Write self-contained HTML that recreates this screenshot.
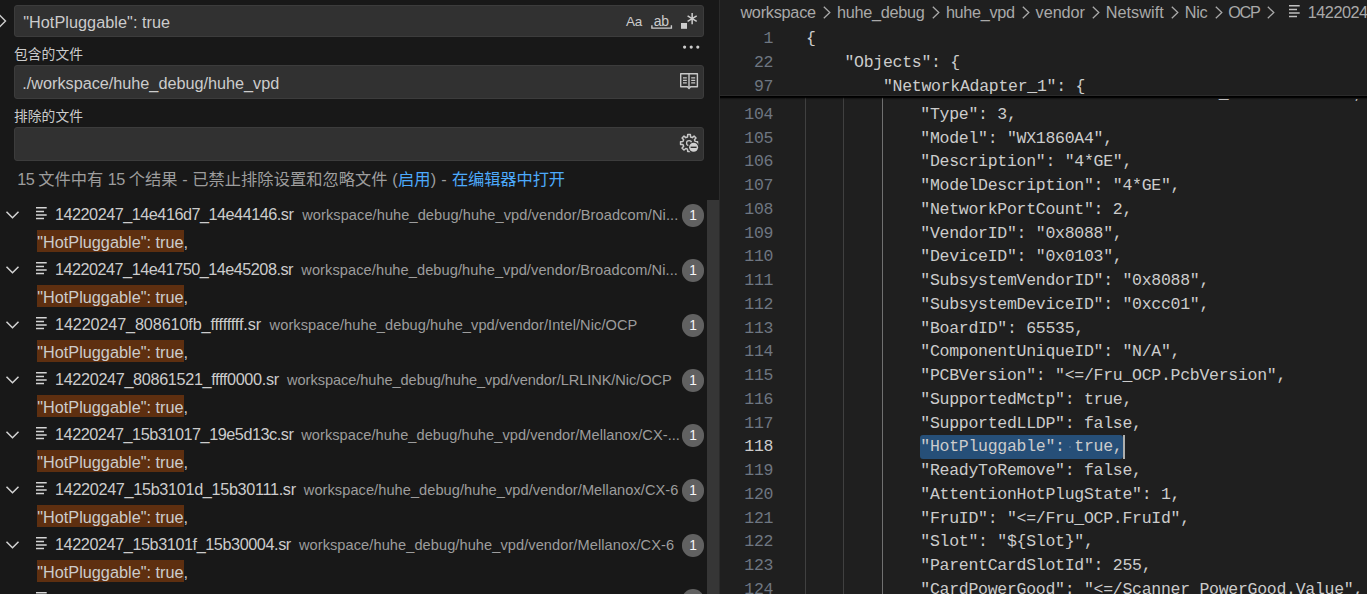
<!DOCTYPE html>
<html lang="zh-CN"><head><meta charset="utf-8"><title>Search</title>
<style>
html,body{margin:0;padding:0;background:#181818;}
body{width:1367px;height:594px;overflow:hidden;position:relative;font-family:'Liberation Sans','Noto Sans CJK SC',sans-serif;color:#cccccc;}
#side{position:absolute;left:0;top:0;width:719px;height:594px;background:#181818;overflow:hidden;}
#side span, #ed span{position:absolute;white-space:pre;}
.box{position:absolute;left:14px;width:690px;background:#313131;border-radius:3px;border:1px solid #3c3c3c;box-sizing:border-box;}
.row{position:absolute;left:0;width:707px;height:27.5px;}
.row span{top:0;line-height:27.5px;}
.nm{color:#cccccc;}
.ds{color:#9d9d9d;margin-top:1px;}
.badge{position:absolute;left:681.7px;top:3.5px;width:22.6px;height:22.6px;border-radius:50%;background:#616161;color:#f8f8f8;font-size:13.75px;line-height:24.6px;text-align:center;}
.hl{position:absolute;left:37px;top:2px;width:147px;height:22px;background:#5e2f10;}
#ed{position:absolute;left:720px;top:0;width:647px;height:594px;background:#1f1f1f;overflow:hidden;}
#ed .ln{font-family:'Liberation Mono','Noto Sans CJK SC',monospace;font-size:16.5px;letter-spacing:-0.276px;color:#6e7681;line-height:23.75px;text-align:right;width:60px;left:-6.8px;}
#ed .cd{font-family:'Liberation Mono','Noto Sans CJK SC',monospace;font-size:16.5px;letter-spacing:-0.276px;color:#cccccc;line-height:23.75px;}
.g{position:absolute;width:1px;background:#404040;}
.bc{color:#a9a9a9;top:0;line-height:24px;}
svg{position:absolute;overflow:visible;}
</style></head><body>

<div id="side">
<svg style="left:-5px;top:14px" width="12" height="14" viewBox="0 0 12 14"><path d="M4.5 1 L10.5 7 L4.5 13" fill="none" stroke="#cccccc" stroke-width="1.4"/></svg>
<div class="box" style="top:5px;height:32px"></div>
<span style="left:23.20px;font-size:16.25px;letter-spacing:0.043px;top:6px;line-height:32px;">&quot;HotPluggable&quot;: true</span>
<span style="left:626px;top:6px;line-height:32px;font-size:13.5px;color:#cccccc;letter-spacing:-0.3px">Aa</span>
<span style="left:653.7px;top:5px;line-height:32px;font-size:14px;color:#cccccc;letter-spacing:-0.2px">ab</span>
<svg style="left:0;top:0" width="719" height="60" viewBox="0 0 719 60"><path d="M651.9 25.3 V28.1 H671.4 V25.3" fill="none" stroke="#cccccc" stroke-width="1.4"/><rect x="681" y="23" width="6" height="5.8" fill="#cccccc"/><path d="M692.15 13.1 V24.2 M687.6 15.9 L696.7 21.4 M696.7 15.9 L687.6 21.4" fill="none" stroke="#cccccc" stroke-width="1.5"/><circle cx="684.6" cy="47.1" r="1.6" fill="#cccccc"/><circle cx="691.2" cy="47.1" r="1.6" fill="#cccccc"/><circle cx="697.8" cy="47.1" r="1.6" fill="#cccccc"/></svg>
<span style="left:14.00px;font-size:13.75px;letter-spacing:0.047px;top:45px;line-height:20px;">包含的文件</span>
<div class="box" style="top:65px;height:34px"></div>
<span style="left:22.30px;font-size:16.25px;letter-spacing:-0.019px;top:67px;line-height:32px;">./workspace/huhe_debug/huhe_vpd</span>
<svg style="left:0;top:0" width="719" height="110" viewBox="0 0 719 110"><path d="M680.7 73.8 H697.4 V86.8 H690.6 L689 88.6 L687.4 86.8 H680.7 Z M689 74 V87" fill="none" stroke="#c8c8c8" stroke-width="1.4" stroke-linejoin="round"/><path d="M683 77.8 H686.8 M683 80.3 H686.8 M683 82.9 H686.8 M691.2 77.8 H695.2 M691.2 80.3 H695.2 M691.2 82.9 H695.2" stroke="#c8c8c8" stroke-width="1.2"/></svg>
<span style="left:14.00px;font-size:13.75px;letter-spacing:0.047px;top:107px;line-height:20px;">排除的文件</span>
<div class="box" style="top:127px;height:34px"></div>
<svg style="left:0;top:0" width="719" height="170" viewBox="0 0 719 170"><path d="M687.53 136.94 L687.70 134.56 L690.40 134.56 L690.57 136.94 L692.29 137.65 L694.10 136.09 L696.01 138.00 L694.45 139.81 L695.16 141.53 L697.54 141.70 L697.54 144.40 L695.16 144.57 L694.45 146.29 L696.01 148.10 L694.10 150.01 L692.29 148.45 L690.57 149.16 L690.40 151.54 L687.70 151.54 L687.53 149.16 L685.81 148.45 L684.00 150.01 L682.09 148.10 L683.65 146.29 L682.94 144.57 L680.56 144.40 L680.56 141.70 L682.94 141.53 L683.65 139.81 L682.09 138.00 L684.00 136.09 L685.81 137.65 Z" fill="none" stroke="#c8c8c8" stroke-width="1.5" stroke-linejoin="round"/><circle cx="689.05" cy="143.05" r="2.5" fill="none" stroke="#c8c8c8" stroke-width="1.3"/><circle cx="693.6" cy="147.3" r="5.6" fill="#313131"/><circle cx="693.6" cy="147.3" r="4.5" fill="#d0d0d0"/><path d="M690.6 147.3 H696.6" stroke="#313131" stroke-width="1.4"/></svg>
<span style="left:17.20px;font-size:16.25px;letter-spacing:0.037px;top:165px;line-height:28px;color:#9d9d9d;"><i style="font-style:normal;letter-spacing:-0.55px">15 </i>文件中有 <i style="font-style:normal;letter-spacing:-0.55px">15 </i>个结果 - 已禁止排除设置和忽略文件 (</span>
<span style="left:397.90px;font-size:16.25px;letter-spacing:0.150px;top:165px;line-height:28px;color:#4daafc;">启用</span>
<span style="left:430.70px;font-size:16.25px;letter-spacing:0.335px;top:165px;line-height:28px;color:#9d9d9d;">) - </span>
<span style="left:451.90px;font-size:16.25px;letter-spacing:-0.093px;top:165px;line-height:28px;color:#4daafc;">在编辑器中打开</span>
<div class="row" style="top:200.5px">
<svg style="left:6.4px;top:10.4px" width="13" height="8" viewBox="0 0 13 8"><path d="M0.5 0.7 L6.5 6.8 L12.5 0.7" fill="none" stroke="#d4d4d4" stroke-width="1.5"/></svg>
<svg style="left:35.6px;top:6px" width="12" height="13" viewBox="0 0 12 13"><path d="M0 0.8 H10.7 M0 4.4 H8 M0 8 H10.7 M0 11.6 H8" stroke="#d4d4d4" stroke-width="1.5"/></svg>
<span class="nm" style="left:55.00px;font-size:16.25px;letter-spacing:-0.508px;">14220247_14e416d7_14e44146.sr</span>
<span class="ds" style="left:302.20px;font-size:14.6px;letter-spacing:0.073px;">workspace/huhe_debug/huhe_vpd/vendor/Broadcom/Ni...</span>
<div class="badge">1</div>
</div>
<div class="row" style="top:228.0px"><div class="hl"></div>
<span style="left:37.2px;top:1px;font-size:16.25px;letter-spacing:0.013px;color:#cccccc">&quot;HotPluggable&quot;: true,</span>
</div>
<div class="row" style="top:255.5px">
<svg style="left:6.4px;top:10.4px" width="13" height="8" viewBox="0 0 13 8"><path d="M0.5 0.7 L6.5 6.8 L12.5 0.7" fill="none" stroke="#d4d4d4" stroke-width="1.5"/></svg>
<svg style="left:35.6px;top:6px" width="12" height="13" viewBox="0 0 12 13"><path d="M0 0.8 H10.7 M0 4.4 H8 M0 8 H10.7 M0 11.6 H8" stroke="#d4d4d4" stroke-width="1.5"/></svg>
<span class="nm" style="left:55.00px;font-size:16.25px;letter-spacing:-0.522px;">14220247_14e41750_14e45208.sr</span>
<span class="ds" style="left:301.30px;font-size:14.6px;letter-spacing:0.084px;">workspace/huhe_debug/huhe_vpd/vendor/Broadcom/Ni...</span>
<div class="badge">1</div>
</div>
<div class="row" style="top:283.0px"><div class="hl"></div>
<span style="left:37.2px;top:1px;font-size:16.25px;letter-spacing:0.013px;color:#cccccc">&quot;HotPluggable&quot;: true,</span>
</div>
<div class="row" style="top:310.5px">
<svg style="left:6.4px;top:10.4px" width="13" height="8" viewBox="0 0 13 8"><path d="M0.5 0.7 L6.5 6.8 L12.5 0.7" fill="none" stroke="#d4d4d4" stroke-width="1.5"/></svg>
<svg style="left:35.6px;top:6px" width="12" height="13" viewBox="0 0 12 13"><path d="M0 0.8 H10.7 M0 4.4 H8 M0 8 H10.7 M0 11.6 H8" stroke="#d4d4d4" stroke-width="1.5"/></svg>
<span class="nm" style="left:55.00px;font-size:16.25px;letter-spacing:-0.151px;">14220247_808610fb_ffffffff.sr</span>
<span class="ds" style="left:269.60px;font-size:14.6px;letter-spacing:0.070px;">workspace/huhe_debug/huhe_vpd/vendor/Intel/Nic/OCP</span>
<div class="badge">1</div>
</div>
<div class="row" style="top:338.0px"><div class="hl"></div>
<span style="left:37.2px;top:1px;font-size:16.25px;letter-spacing:0.013px;color:#cccccc">&quot;HotPluggable&quot;: true,</span>
</div>
<div class="row" style="top:365.5px">
<svg style="left:6.4px;top:10.4px" width="13" height="8" viewBox="0 0 13 8"><path d="M0.5 0.7 L6.5 6.8 L12.5 0.7" fill="none" stroke="#d4d4d4" stroke-width="1.5"/></svg>
<svg style="left:35.6px;top:6px" width="12" height="13" viewBox="0 0 12 13"><path d="M0 0.8 H10.7 M0 4.4 H8 M0 8 H10.7 M0 11.6 H8" stroke="#d4d4d4" stroke-width="1.5"/></svg>
<span class="nm" style="left:55.00px;font-size:16.25px;letter-spacing:-0.357px;">14220247_80861521_ffff0000.sr</span>
<span class="ds" style="left:287.10px;font-size:14.6px;letter-spacing:-0.063px;">workspace/huhe_debug/huhe_vpd/vendor/LRLINK/Nic/OCP</span>
<div class="badge">1</div>
</div>
<div class="row" style="top:393.0px"><div class="hl"></div>
<span style="left:37.2px;top:1px;font-size:16.25px;letter-spacing:0.013px;color:#cccccc">&quot;HotPluggable&quot;: true,</span>
</div>
<div class="row" style="top:420.5px">
<svg style="left:6.4px;top:10.4px" width="13" height="8" viewBox="0 0 13 8"><path d="M0.5 0.7 L6.5 6.8 L12.5 0.7" fill="none" stroke="#d4d4d4" stroke-width="1.5"/></svg>
<svg style="left:35.6px;top:6px" width="12" height="13" viewBox="0 0 12 13"><path d="M0 0.8 H10.7 M0 4.4 H8 M0 8 H10.7 M0 11.6 H8" stroke="#d4d4d4" stroke-width="1.5"/></svg>
<span class="nm" style="left:55.00px;font-size:16.25px;letter-spacing:-0.473px;">14220247_15b31017_19e5d13c.sr</span>
<span class="ds" style="left:301.20px;font-size:14.6px;letter-spacing:0.061px;">workspace/huhe_debug/huhe_vpd/vendor/Mellanox/CX-...</span>
<div class="badge">1</div>
</div>
<div class="row" style="top:448.0px"><div class="hl"></div>
<span style="left:37.2px;top:1px;font-size:16.25px;letter-spacing:0.013px;color:#cccccc">&quot;HotPluggable&quot;: true,</span>
</div>
<div class="row" style="top:475.5px">
<svg style="left:6.4px;top:10.4px" width="13" height="8" viewBox="0 0 13 8"><path d="M0.5 0.7 L6.5 6.8 L12.5 0.7" fill="none" stroke="#d4d4d4" stroke-width="1.5"/></svg>
<svg style="left:35.6px;top:6px" width="12" height="13" viewBox="0 0 12 13"><path d="M0 0.8 H10.7 M0 4.4 H8 M0 8 H10.7 M0 11.6 H8" stroke="#d4d4d4" stroke-width="1.5"/></svg>
<span class="nm" style="left:55.00px;font-size:16.25px;letter-spacing:-0.342px;">14220247_15b3101d_15b30111.sr</span>
<span class="ds" style="left:303.80px;font-size:14.6px;letter-spacing:0.060px;">workspace/huhe_debug/huhe_vpd/vendor/Mellanox/CX-6</span>
<div class="badge">1</div>
</div>
<div class="row" style="top:503.0px"><div class="hl"></div>
<span style="left:37.2px;top:1px;font-size:16.25px;letter-spacing:0.013px;color:#cccccc">&quot;HotPluggable&quot;: true,</span>
</div>
<div class="row" style="top:530.5px">
<svg style="left:6.4px;top:10.4px" width="13" height="8" viewBox="0 0 13 8"><path d="M0.5 0.7 L6.5 6.8 L12.5 0.7" fill="none" stroke="#d4d4d4" stroke-width="1.5"/></svg>
<svg style="left:35.6px;top:6px" width="12" height="13" viewBox="0 0 12 13"><path d="M0 0.8 H10.7 M0 4.4 H8 M0 8 H10.7 M0 11.6 H8" stroke="#d4d4d4" stroke-width="1.5"/></svg>
<span class="nm" style="left:55.00px;font-size:16.25px;letter-spacing:-0.438px;">14220247_15b3101f_15b30004.sr</span>
<span class="ds" style="left:298.90px;font-size:14.6px;letter-spacing:0.074px;">workspace/huhe_debug/huhe_vpd/vendor/Mellanox/CX-6</span>
<div class="badge">1</div>
</div>
<div class="row" style="top:558.0px"><div class="hl"></div>
<span style="left:37.2px;top:1px;font-size:16.25px;letter-spacing:0.013px;color:#cccccc">&quot;HotPluggable&quot;: true,</span>
</div>
<div class="row" style="top:585.5px">
<svg style="left:6.4px;top:10.4px" width="13" height="8" viewBox="0 0 13 8"><path d="M0.5 0.7 L6.5 6.8 L12.5 0.7" fill="none" stroke="#d4d4d4" stroke-width="1.5"/></svg>
<svg style="left:35.6px;top:6px" width="12" height="13" viewBox="0 0 12 13"><path d="M0 0.8 H10.7 M0 4.4 H8 M0 8 H10.7 M0 11.6 H8" stroke="#d4d4d4" stroke-width="1.5"/></svg>
<span class="nm" style="left:55.00px;font-size:16.25px;letter-spacing:-0.587px;top:1.5px;">14220247_15b31015_15b30025.sr</span>
<span class="ds" style="left:299.00px;font-size:14.6px;letter-spacing:0.068px;top:1.5px;">workspace/huhe_debug/huhe_vpd/vendor/Mellanox/CX-6</span>
<div class="badge">1</div>
</div>
<div class="row" style="top:613.0px"><div class="hl"></div>
<span style="left:37.2px;top:1px;font-size:16.25px;letter-spacing:0.013px;color:#cccccc">&quot;HotPluggable&quot;: true,</span>
</div>
<div style="position:absolute;left:707px;top:200px;width:12px;height:394px;background:#363636"></div>
</div>
<div style="position:absolute;left:719px;top:0;width:1px;height:594px;background:#2b2b2b"></div>
<div id="ed">
<div class="g" style="left:85px;top:96px;height:500px;background:#404040"></div>
<div class="g" style="left:123px;top:96px;height:500px;background:#404040"></div>
<div class="g" style="left:162px;top:96px;height:500px;background:#707070"></div>
<div style="position:absolute;left:0;top:98.6px;width:647px;height:6px;overflow:hidden"><span class="cd" style="left:200.250px;top:-16.40px">"ManufactureId": "&lt;=/ConnectorA_Board.Vendor",</span></div>
<div style="position:absolute;left:199.75px;top:435px;width:203px;height:24px;background:#264f78;border-radius:3px"></div>
<div style="position:absolute;left:402.75px;top:435px;width:2.3px;height:24px;background:#aeafad"></div>
<div style="position:absolute;left:348.5px;top:446.2px;width:2px;height:2px;border-radius:1px;background:rgba(255,255,255,0.18)"></div>
<span class="ln" style="top:102.75px;color:#6e7681">104</span>
<span class="cd" style="left:200.250px;top:102.75px">&quot;Type&quot;: 3,</span>
<span class="ln" style="top:126.50px;color:#6e7681">105</span>
<span class="cd" style="left:200.250px;top:126.50px">&quot;Model&quot;: &quot;WX1860A4&quot;,</span>
<span class="ln" style="top:150.25px;color:#6e7681">106</span>
<span class="cd" style="left:200.250px;top:150.25px">&quot;Description&quot;: &quot;4*GE&quot;,</span>
<span class="ln" style="top:174.00px;color:#6e7681">107</span>
<span class="cd" style="left:200.250px;top:174.00px">&quot;ModelDescription&quot;: &quot;4*GE&quot;,</span>
<span class="ln" style="top:197.75px;color:#6e7681">108</span>
<span class="cd" style="left:200.250px;top:197.75px">&quot;NetworkPortCount&quot;: 2,</span>
<span class="ln" style="top:221.50px;color:#6e7681">109</span>
<span class="cd" style="left:200.250px;top:221.50px">&quot;VendorID&quot;: &quot;0x8088&quot;,</span>
<span class="ln" style="top:245.25px;color:#6e7681">110</span>
<span class="cd" style="left:200.250px;top:245.25px">&quot;DeviceID&quot;: &quot;0x0103&quot;,</span>
<span class="ln" style="top:269.00px;color:#6e7681">111</span>
<span class="cd" style="left:200.250px;top:269.00px">&quot;SubsystemVendorID&quot;: &quot;0x8088&quot;,</span>
<span class="ln" style="top:292.75px;color:#6e7681">112</span>
<span class="cd" style="left:200.250px;top:292.75px">&quot;SubsystemDeviceID&quot;: &quot;0xcc01&quot;,</span>
<span class="ln" style="top:316.50px;color:#6e7681">113</span>
<span class="cd" style="left:200.250px;top:316.50px">&quot;BoardID&quot;: 65535,</span>
<span class="ln" style="top:340.25px;color:#6e7681">114</span>
<span class="cd" style="left:200.250px;top:340.25px">&quot;ComponentUniqueID&quot;: &quot;N/A&quot;,</span>
<span class="ln" style="top:364.00px;color:#6e7681">115</span>
<span class="cd" style="left:200.250px;top:364.00px">&quot;PCBVersion&quot;: &quot;&lt;=/Fru_OCP.PcbVersion&quot;,</span>
<span class="ln" style="top:387.75px;color:#6e7681">116</span>
<span class="cd" style="left:200.250px;top:387.75px">&quot;SupportedMctp&quot;: true,</span>
<span class="ln" style="top:411.50px;color:#6e7681">117</span>
<span class="cd" style="left:200.250px;top:411.50px">&quot;SupportedLLDP&quot;: false,</span>
<span class="ln" style="top:435.25px;color:#cccccc">118</span>
<span class="cd" style="left:200.250px;top:435.25px">&quot;HotPluggable&quot;: true,</span>
<span class="ln" style="top:459.00px;color:#6e7681">119</span>
<span class="cd" style="left:200.250px;top:459.00px">&quot;ReadyToRemove&quot;: false,</span>
<span class="ln" style="top:482.75px;color:#6e7681">120</span>
<span class="cd" style="left:200.250px;top:482.75px">&quot;AttentionHotPlugState&quot;: 1,</span>
<span class="ln" style="top:506.50px;color:#6e7681">121</span>
<span class="cd" style="left:200.250px;top:506.50px">&quot;FruID&quot;: &quot;&lt;=/Fru_OCP.FruId&quot;,</span>
<span class="ln" style="top:530.25px;color:#6e7681">122</span>
<span class="cd" style="left:200.250px;top:530.25px">&quot;Slot&quot;: &quot;${Slot}&quot;,</span>
<span class="ln" style="top:554.00px;color:#6e7681">123</span>
<span class="cd" style="left:200.250px;top:554.00px">&quot;ParentCardSlotId&quot;: 255,</span>
<span class="ln" style="top:577.75px;color:#6e7681">124</span>
<span class="cd" style="left:200.250px;top:577.75px">&quot;CardPowerGood&quot;: &quot;&lt;=/Scanner_PowerGood.Value&quot;,</span>
<div style="position:absolute;left:0;top:96px;width:647px;height:4px;background:linear-gradient(to bottom,#000 0,#000 1.3px,rgba(0,0,0,0.35) 2.4px,rgba(0,0,0,0) 3.8px)"></div>
<div style="position:absolute;left:0;top:0;width:647px;height:96px;background:#1f1f1f;border-bottom:1px solid #2b2b2b;box-sizing:border-box"></div>
<span class="ln" style="top:27.45px">1</span>
<span class="cd" style="left:85.950px;top:27.45px">{</span>
<span class="ln" style="top:51.20px">22</span>
<span class="cd" style="left:124.450px;top:51.20px">&quot;Objects&quot;: {</span>
<span class="ln" style="top:74.95px">97</span>
<span class="cd" style="left:162.950px;top:74.95px">&quot;NetworkAdapter_1&quot;: {</span>
<span class="bc" style="left:20.40px;font-size:16.25px;letter-spacing:-0.252px">workspace</span>
<svg style="left:102.80px;top:5.7px" width="8" height="13" viewBox="0 0 8 13"><path d="M0.8 0.8 L6.8 6.5 L0.8 12.2" fill="none" stroke="#a9a9a9" stroke-width="1.3"/></svg>
<span class="bc" style="left:116.90px;font-size:16.25px;letter-spacing:-0.277px">huhe_debug</span>
<svg style="left:211.50px;top:5.7px" width="8" height="13" viewBox="0 0 8 13"><path d="M0.8 0.8 L6.8 6.5 L0.8 12.2" fill="none" stroke="#a9a9a9" stroke-width="1.3"/></svg>
<span class="bc" style="left:225.90px;font-size:16.25px;letter-spacing:-0.311px">huhe_vpd</span>
<svg style="left:301.80px;top:5.7px" width="8" height="13" viewBox="0 0 8 13"><path d="M0.8 0.8 L6.8 6.5 L0.8 12.2" fill="none" stroke="#a9a9a9" stroke-width="1.3"/></svg>
<span class="bc" style="left:315.60px;font-size:16.25px;letter-spacing:-0.065px">vendor</span>
<svg style="left:371.90px;top:5.7px" width="8" height="13" viewBox="0 0 8 13"><path d="M0.8 0.8 L6.8 6.5 L0.8 12.2" fill="none" stroke="#a9a9a9" stroke-width="1.3"/></svg>
<span class="bc" style="left:385.70px;font-size:16.25px;letter-spacing:0.050px">Netswift</span>
<svg style="left:450.90px;top:5.7px" width="8" height="13" viewBox="0 0 8 13"><path d="M0.8 0.8 L6.8 6.5 L0.8 12.2" fill="none" stroke="#a9a9a9" stroke-width="1.3"/></svg>
<span class="bc" style="left:464.70px;font-size:16.25px;letter-spacing:-0.228px">Nic</span>
<svg style="left:494.50px;top:5.7px" width="8" height="13" viewBox="0 0 8 13"><path d="M0.8 0.8 L6.8 6.5 L0.8 12.2" fill="none" stroke="#a9a9a9" stroke-width="1.3"/></svg>
<span class="bc" style="left:508.30px;font-size:16.25px;letter-spacing:-1.340px">OCP</span>
<svg style="left:546.50px;top:5.7px" width="8" height="13" viewBox="0 0 8 13"><path d="M0.8 0.8 L6.8 6.5 L0.8 12.2" fill="none" stroke="#a9a9a9" stroke-width="1.3"/></svg>
<svg style="left:568.7px;top:5.4px" width="12" height="13" viewBox="0 0 12 13"><path d="M0 0.8 H10.7 M0 4.4 H8 M0 8 H10.7 M0 11.6 H8" stroke="#c0c0c0" stroke-width="1.5"/></svg>
<span class="bc" style="left:587.8px;font-size:16.25px;letter-spacing:-0.5px">14220247_15b31017</span>
</div>
</body></html>
